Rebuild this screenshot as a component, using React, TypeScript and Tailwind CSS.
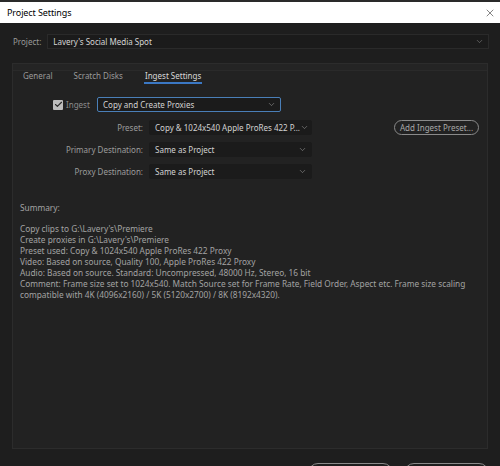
import { Check, ChevronDown, X } from "lucide-react";

function Select({ value, width, focused }: { value: string; width: string; focused?: boolean }) {
  return (
    <div
      className={`flex h-[15px] items-center justify-between rounded-[2px] border bg-[#1b1b1b] pl-[5px] pr-[4px] ${width} ${
        focused ? "border-[#4a7fb8]" : "border-[#1b1b1b]"
      }`}
    >
      <span className="whitespace-nowrap text-[#d2d2d2]">{value}</span>
      <ChevronDown size={9} strokeWidth={1.5} className="shrink-0 text-[#9a9a9a]" />
    </div>
  );
}

function FormRow({ label, value }: { label: string; value: string }) {
  return (
    <div className="flex items-center">
      <span className="w-[136px] pr-[6px] text-right text-[#9c9c9c]">{label}</span>
      <Select value={value} width="w-[163px]" />
    </div>
  );
}

const summary = [
  "Copy clips to G:\\Lavery's\\Premiere",
  "Create proxies in G:\\Lavery's\\Premiere",
  "Preset used: Copy & 1024x540 Apple ProRes 422 Proxy",
  "Video: Based on source, Quality 100, Apple ProRes 422 Proxy",
  "Audio: Based on source. Standard: Uncompressed, 48000 Hz, Stereo, 16 bit",
  "Comment: Frame size set to 1024x540. Match Source set for Frame Rate, Field Order, Aspect etc. Frame size scaling",
  "compatible with 4K (4096x2160) / 5K (5120x2700) / 8K (8192x4320).",
];

export default function App() {
  return (
    <div
      className="flex h-[466px] w-[500px] flex-col overflow-hidden bg-[#1e1e1e] text-[8px] leading-none"
      style={{ fontFamily: '"Noto Sans", "Open Sans", sans-serif' }}
    >
      <div className="flex h-[23px] shrink-0 items-center justify-between border-t-[2px] border-[#2a2a2a] bg-white pl-[7px] pr-[4px]">
        <span className="text-[9px] tracking-[-0.1px] text-black">Project Settings</span>
        <X size={12} strokeWidth={1.2} className="text-[#333]" />
      </div>

      <div className="mt-[11px] flex shrink-0 items-center pl-[13px] pr-[11px]">
        <span className="mr-[6px] text-[#9a9a9a]">Project:</span>
        <div className="flex h-[15px] flex-1 items-center justify-between border border-[#2a2a2a] bg-[#1b1b1b] pl-[5px] pr-[4px]">
          <span className="text-[#d6d6d6]">Lavery's Social Media Spot</span>
          <ChevronDown size={9} strokeWidth={1.5} className="text-[#8a8a8a]" />
        </div>
      </div>

      <div className="mx-[12px] mt-[14px] flex h-[386px] shrink-0 flex-col border border-[#2c2c2c] bg-[#222222]">
        <div className="h-[7px] border-b border-[#2a2a2a] bg-[#242424]" />
        <div className="flex items-end gap-[21px] pl-[10px] pt-[1px]">
          <span className="pb-[4px] text-[#9a9a9a]">General</span>
          <span className="pb-[4px] text-[#9a9a9a]">Scratch Disks</span>
          <span className="border-b-[2px] border-[#3b78c4] px-[1px] pb-[2px] text-[#d8d8d8]">
            Ingest Settings
          </span>
        </div>

        <div className="mt-[13px] flex items-center pl-[40px]">
          <div className="flex w-[44px] items-center">
            <div className="flex h-[10px] w-[10px] items-center justify-center rounded-[1px] bg-[#bdbdbd]">
              <Check size={9} strokeWidth={3} className="text-[#2a2a2a]" />
            </div>
            <span className="ml-[3px] text-[#8c8c8c]">Ingest</span>
          </div>
          <Select value="Copy and Create Proxies" width="w-[184px]" focused />
        </div>

        <div className="mt-[8px] flex items-start">
          <div className="flex flex-col gap-[7px]">
            <FormRow label="Preset:" value="Copy & 1024x540 Apple ProRes 422 P..." />
            <FormRow label="Primary Destination:" value="Same as Project" />
            <FormRow label="Proxy Destination:" value="Same as Project" />
          </div>
          <div className="ml-[82px] flex h-[15px] items-center rounded-full border border-[#8a8a8a] px-[5px] text-[#a8a8a8]">
            Add Ingest Preset...
          </div>
        </div>

        <div className="mt-[23px] pl-[7px] text-[8.3px] leading-[11px] text-[#a2a2a2]">
          <div>Summary:</div>
          <div className="mt-[10px]">
            {summary.map((line) => (
              <div key={line}>{line}</div>
            ))}
          </div>
        </div>
      </div>

      <div className="mt-[14px] flex shrink-0 justify-end gap-[11px] pr-[11px]">
        <div className="h-[20px] w-[85px] rounded-full border border-[#8a8a8a]" />
        <div className="h-[20px] w-[85px] rounded-full border border-[#8a8a8a]" />
      </div>
    </div>
  );
}
